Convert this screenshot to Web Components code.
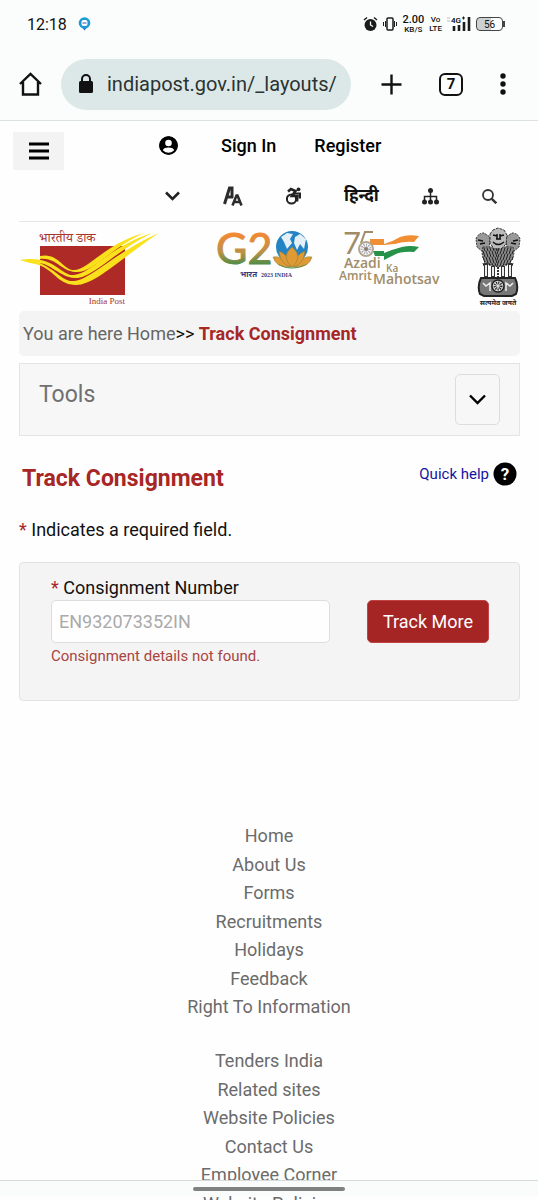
<!DOCTYPE html>
<html lang="en">
<head>
<meta charset="utf-8">
<meta name="viewport" content="width=device-width, initial-scale=1">
<title>Track Consignment - India Post</title>
<style>
  body {
    margin: 0;
    height: 100vh;
    overflow: hidden;
    background: #fefefe;
    color: #111;
    font-family: Roboto, "Noto Sans Devanagari", "Noto Sans", sans-serif;
    font-size: 18px;
  }
</style>
</head>
<body>
<phone-status time="12:18"></phone-status>
<browser-bar tabs="7">indiapost.gov.in/_layouts/</browser-bar>

<site-header>
  <a slot="account" href="#signin">Sign In</a>
  <a slot="account" href="#register">Register</a>
</site-header>

<page-body>
  <logo-strip></logo-strip>
  <bread-crumb>Track Consignment</bread-crumb>
  <tool-panel>Tools</tool-panel>
  <page-title>Track Consignment</page-title>
  <track-form number="EN932073352IN">Consignment details not found.</track-form>
</page-body>

<footer-links>
  <a href="#home">Home</a>
  <a href="#about">About Us</a>
  <a href="#forms">Forms</a>
  <a href="#recruitments">Recruitments</a>
  <a href="#holidays">Holidays</a>
  <a href="#feedback">Feedback</a>
  <a href="#rti">Right To Information</a>
</footer-links>
<footer-links>
  <a href="#tenders">Tenders India</a>
  <a href="#related">Related sites</a>
  <a href="#policies">Website Policies</a>
  <a href="#contact">Contact Us</a>
  <a href="#employee">Employee Corner</a>
  <a href="#website-policies">Website Policies</a>
</footer-links>
<gesture-bar></gesture-bar>

<script>
// Shared base: puts styles and markup in an open shadow root
class BaseElement extends HTMLElement {
  constructor() {
    super();
    const shadowRoot = this.attachShadow({mode: 'open'});
    shadowRoot.innerHTML = `
      <style>
        :host, * { box-sizing: border-box; }
        svg { display: block; flex: none; }
        button { font: inherit; color: inherit; padding: 0; border: 0; background: none; }
        ${this.styles()}
      </style>
      ${this.markup()}
    `;
  }
}

// Phone status row

class PhoneStatus extends BaseElement {
  styles() {
    return `
      :host {
        display: flex;
        align-items: center;
        height: 48px;
        padding: 0 33px 0 27px;
        background: #fbfdfd;
        font-size: 16px;
      }
      .badge { margin-left: 11px; }
      .right { display: flex; align-items: center; gap: 5px; margin-left: auto; }
      .stack {
        display: flex;
        flex-direction: column;
        align-items: center;
        font-weight: 500;
        font-size: 8px;
        line-height: 9px;
      }
      .stack b { font-size: 11px; line-height: 11px; font-weight: 500; }
      .battery {
        display: flex;
        align-items: center;
        justify-content: center;
        width: 27px;
        height: 14px;
        border: 1px solid #444;
        border-radius: 4px;
        background: linear-gradient(90deg, #ccd0d0 56%, #fbfdfd 56%);
        font-size: 10px;
      }
      .cell { display: flex; align-items: center; }
      .cell::after { content: ''; width: 2px; height: 6px; background: #444; }
    `;
  }
  markup() {
    return `
      <span>${this.getAttribute('time')}</span>
      <svg class="badge" width="13" height="14" viewBox="0 0 13 14">
        <path d="M4 10h5l-2.500 3.500z" fill="#3459a8"/>
        <circle cx="6.500" cy="6" r="5.800" fill="#1b9ad6"/>
        <rect x="3.500" y="3" width="6" height="6" rx="2" fill="#fff"/>
        <path d="M4.500 6h4" stroke="#3459a8"/>
      </svg>
      <div class="right">
        <svg width="15" height="16" viewBox="0 0 15 16">
          <circle cx="7.500" cy="9" r="6" fill="#1a1c1c"/>
          <path d="M1 4l3-2.500M14 4l-3-2.500" stroke="#1a1c1c" stroke-width="1.500"/>
          <path d="M7.500 5.500V9l2.500 1.500" fill="none" stroke="#fff" stroke-width="1.300"/>
        </svg>
        <svg width="14" height="14" viewBox="0 0 14 14" fill="none" stroke="#1a1c1c">
          <rect x="4" y="1" width="6" height="12" rx="1" stroke-width="1.500"/>
          <path d="M2.500 4v6M.5 5v4M11.500 4v6M13.500 5v4"/>
        </svg>
        <span class="stack"><b>2.00</b><span>KB/S</span></span>
        <span class="stack"><span>Vo</span><span>LTE</span></span>
        <svg width="24" height="16" viewBox="0 0 24 16">
          <path d="M0 2h3M0 5h3" stroke="#bbb"/>
          <text x="4" y="7" font-size="8" font-weight="500">4G</text>
          <path d="M15 2h3M16.500 .5v3" stroke="#1a1c1c"/>
          <path d="M7 15v-5M12 15V9M17 15V6M22 15V1" stroke="#1a1c1c" stroke-width="2.600"/>
        </svg>
        <span class="cell"><span class="battery">56</span></span>
      </div>
    `;
  }
}
customElements.define('phone-status', PhoneStatus);

// Address bar with home, tabs and menu

class BrowserBar extends BaseElement {
  styles() {
    return `
      :host {
        display: flex;
        align-items: center;
        height: 73px;
        padding: 0 32px 0 18px;
        border-bottom: 1px solid #dde3e4;
        background: #fbfdfd;
      }
      .address {
        display: flex;
        align-items: center;
        flex: 1;
        height: 51px;
        margin-left: 18px;
        padding-left: 18px;
        gap: 14px;
        border-radius: 26px;
        background: #dce8e7;
        font-size: 20px;
        color: #2b3333;
      }
      .tools { display: flex; align-items: center; gap: 37px; margin-left: 30px; }
      .tabs {
        width: 24px;
        height: 23px;
        border: 2px solid #111;
        border-radius: 6px;
        font-size: 15px;
        line-height: 19px;
        font-weight: 700;
      }
    `;
  }
  markup() {
    return `
      <button aria-label="Home page">
        <svg width="25" height="26" viewBox="0 0 25 26" fill="none" stroke="#111" stroke-width="2.400">
          <path d="M2 13L12.500 3 23 13M5 11v12.500h15V11"/>
        </svg>
      </button>
      <div class="address">
        <svg width="14" height="20" viewBox="0 0 14 20">
          <rect y="7" width="14" height="12" rx="1.500" fill="#111"/>
          <path d="M3 8V5a4 4 0 0 1 8 0v3" fill="none" stroke="#111" stroke-width="2"/>
        </svg>
        <span><slot></slot></span>
      </div>
      <div class="tools">
        <button aria-label="New tab">
          <svg width="21" height="21" viewBox="0 0 21 21" stroke="#111" stroke-width="2.400">
            <path d="M.5 10.500h20M10.500 .5v20"/>
          </svg>
        </button>
        <button class="tabs" aria-label="Open tabs">${this.getAttribute('tabs')}</button>
        <button aria-label="Menu">
          <svg width="6" height="22" viewBox="0 0 6 22" fill="#111">
            <circle cx="3" cy="3" r="2.700"/><circle cx="3" cy="11" r="2.700"/><circle cx="3" cy="19" r="2.700"/>
          </svg>
        </button>
      </div>
    `;
  }
}
customElements.define('browser-bar', BrowserBar);

// Menu toggle, account links and accessibility tools

class SiteHeader extends BaseElement {
  styles() {
    return `
      :host {
        display: flex;
        align-items: flex-start;
        height: 100px;
        padding: 11px 13px 0;
      }
      .toggle { display: grid; place-items: center; width: 51px; height: 38px; background: #f3f3f3; }
      .rows { display: flex; flex-direction: column; gap: 25px; margin-left: 95px; }
      .row { display: flex; align-items: center; height: 26px; gap: 43px; }
      .row:first-child { gap: 38px; }
      .row:last-child { padding-left: 6px; }
      .user { margin-right: 5px; }
      ::slotted(a) { color: #000; font-weight: 500; text-decoration: none; }
      .lang { font-size: 17px; font-weight: 700; }
    `;
  }
  markup() {
    return `
      <button class="toggle" aria-label="Toggle navigation">
        <svg width="20" height="18" viewBox="0 0 20 18" stroke="#000" stroke-width="3">
          <path d="M0 2h20M0 9h20M0 16h20"/>
        </svg>
      </button>
      <div class="rows">
        <div class="row">
          <svg class="user" width="19" height="19" viewBox="0 0 19 19">
            <circle cx="9.500" cy="9.500" r="9.300"/>
            <circle cx="9.500" cy="7" r="3.300" fill="#fff"/>
            <path d="M3.600 14.500c1.200-2.400 3-3 5.900-3s4.700.6 5.900 3a7.500 7.500 0 0 1-11.800 0z" fill="#fff"/>
            <circle cx="9.500" cy="9.500" r="8.300" fill="none" stroke="#000" stroke-width="2"/>
          </svg>
          <slot name="account"></slot>
        </div>
        <div class="row">
          <button aria-label="Expand">
            <svg width="15" height="10" viewBox="0 0 15 10" fill="none" stroke="#222" stroke-width="2.600">
              <path d="M1 1.500l6.500 6.500L14 1.500"/>
            </svg>
          </button>
          <button aria-label="Text size">
            <svg width="20" height="20" viewBox="0 0 20 20" fill="none" stroke="#2c2c2c">
              <path d="M1.500 18L6.500 2h2.500v10M4 11h6" stroke-width="3"/>
              <path d="M9.500 19.500l4-10h1l4 10M11 16h6" stroke-width="2.600"/>
            </svg>
          </button>
          <button aria-label="Accessibility">
            <svg width="15" height="18" viewBox="0 0 15 18" fill="none" stroke="#222">
              <circle cx="12.500" cy="2.300" r="1.900" fill="#222" stroke="none"/>
              <circle cx="5.500" cy="12" r="4.600" stroke-width="2"/>
              <path d="M2 4.500l3-2.500 4.500 2-3.500 5h5.500l-.5 5.500" stroke-width="2.600"/>
              <path d="M9 6.500h5v5" stroke-width="2"/>
            </svg>
          </button>
          <span class="lang" lang="hi">हिन्दी</span>
          <button aria-label="Sitemap">
            <svg width="17" height="17" viewBox="0 0 17 17" fill="#222">
              <circle cx="8.500" cy="2.600" r="2.500"/>
              <path d="M8.500 4v9M2.500 13V8.500h12V13" fill="none" stroke="#222" stroke-width="1.500"/>
              <circle cx="2.500" cy="14" r="2.500"/><circle cx="8.500" cy="14" r="2.500"/><circle cx="14.500" cy="14" r="2.500"/>
            </svg>
          </button>
          <button aria-label="Search">
            <svg width="15" height="15" viewBox="0 0 15 15" fill="none" stroke="#333">
              <circle cx="6" cy="6" r="5" stroke-width="1.800"/>
              <path d="M9.800 9.800l4.500 4.500" stroke-width="2.400"/>
            </svg>
          </button>
        </div>
      </div>
    `;
  }
}
customElements.define('site-header', SiteHeader);

class PageBody extends BaseElement {
  styles() {
    return `:host { display: block; padding: 0 18px 0 19px; }`;
  }
  markup() {
    return `<slot></slot>`;
  }
}
customElements.define('page-body', PageBody);

// India Post, G20, Azadi Ka Amrit Mahotsav and the state emblem

class LogoStrip extends BaseElement {
  styles() {
    return `
      :host {
        display: flex;
        justify-content: space-between;
        height: 90px;
        padding-top: 4px;
        border-top: 1px solid #e6e6e6;
      }
      svg { overflow: visible; }
    `;
  }
  // row of short strokes, used for the lions' manes
  mane() {
    let d = '';
    for (let y = 19; y < 35; y += 3) {
      for (let x = 9 + (y % 2); x < 40; x += 3) {
        d += `M${x} ${y}l${x < 24 ? 1 : -1} 3`;
      }
    }
    return d;
  }
  markup() {
    return `
      <svg width="173" height="80" viewBox="-1 0 173 80" role="img" aria-label="India Post">
        <text x="19" y="16" font-size="13" fill="#a8332b" font-family="Noto Serif Devanagari, serif">भारतीय डाक</text>
        <rect x="20" y="20" width="85" height="49" fill="#ae2a26"/>
        <g fill="#fbe11c">
          <path d="M20 30C38 26 43 44 54 44C68 44 88 16 124 7C92 21 72 48 55 46C41 45 36 31 20 33z"/>
          <path d="M0 34C34 28 40 50 54 49C70 48 92 19 132 7C95 25 72 53 55 52C38 51 32 36 12 36z"/>
          <path d="M0 34C30 32 40 57 54 55C70 54 97 25 139 7C101 32 74 60 55 59C35 58 34 40 10 37z"/>
        </g>
        <text x="105" y="78" font-size="9" text-anchor="end" fill="#a8332b" font-family="Liberation Serif, serif">India Post</text>
      </svg>

      <svg width="97" height="60" viewBox="0 -2 97 60" role="img" aria-label="G20 Bharat 2023 India">
        <defs>
          <linearGradient id="tri" x1="0" y1="0" x2="0" y2="1">
            <stop offset=".25" stop-color="#f08a35"/><stop offset=".6" stop-color="#b99147"/><stop offset=".9" stop-color="#2f8a45"/>
          </linearGradient>
        </defs>
        <text x="-1" y="36" font-size="43" fill="url(#tri)" stroke="url(#tri)" font-family="Lato, sans-serif">G2</text>
        <circle cx="75" cy="19" r="16" fill="#2383c4"/>
        <path d="M64 9l6-4 6 1-3 5 2 4-5 6-3-7zM78 9l5-3 6 5-2 10-4-5-3 6-3-7z" fill="#e4f0f5"/>
        <g fill="#e09a35" stroke="#8f7f35" stroke-width=".6">
          <path d="M56 29q10-2 18 10-15 1-18-10zM95 29q-10-2-18 10 15 1 18-10z"/>
          <path d="M62 23q10 4 13 16-12-2-13-16zM88 23q-10 4-13 16 12-2 13-16z"/>
          <path d="M75 19q12 10 0 20-12-10 0-20z"/>
        </g>
        <path d="M60 36q15 7 30 0-15 9-30 0z" fill="#4b8a45"/>
        <text x="23" y="49" font-size="8" font-weight="700" fill="#363b7c">भारत</text>
        <text x="44" y="49" font-size="6" font-weight="700" fill="#363b7c" font-family="Liberation Serif, serif">2023 INDIA</text>
      </svg>

      <svg width="111" height="62" viewBox="0 0 111 62" role="img" aria-label="Azadi Ka Amrit Mahotsav">
        <g fill="#a08c68" font-family="Open Sans, sans-serif">
          <text x="4" y="28" font-size="31" font-weight="400" font-family="Lato, sans-serif">7</text>
          <path d="M34 6h-8l-4 11" fill="none" stroke="#a08c68" stroke-width="2"/>
          <text x="5" y="42" font-size="14" font-weight="600">Azadi</text>
          <text x="47" y="46" font-size="10" font-weight="600">Ka</text>
          <text x="0" y="54" font-size="12" font-weight="600">Amrit</text>
          <text x="34" y="58" font-size="14" font-weight="600">Mahotsav</text>
        </g>
        <path d="M31 13h14v5q8-2 16-7 8-3 19-1l-5 6q-12-1-20 3-7 3-10 2l-14-1z" fill="#f18d32"/>
        <path d="M33 19h12l30-3-4 6q-10 0-18 4l-18 0z" fill="#fff"/>
        <path d="M34 25h11v2q10-4 18-6 8-2 17 0l-5 5q-13-1-20 3-6 3-10 5v-4l-9 0z" fill="#269148"/>
        <circle cx="27" cy="23" r="7" fill="#fff" stroke="#b3a78f" stroke-width="2"/>
        <circle cx="27" cy="23" r="3.500" fill="none" stroke="#a9a9b4" stroke-width="4" stroke-dasharray="1 1"/>
        <circle cx="27" cy="23" r="2" fill="#8a7a68"/>
      </svg>

      <svg width="45" height="82" viewBox="1 -3 45 82" role="img" aria-label="State Emblem of India">
        <g fill="#999" stroke="#333">
          <path d="M2 10q2-6 8-6l6 4-1 14-6 1-6-5zM46 10q-2-6-8-6l-6 4 1 14 6 1 6-5z" stroke-dasharray="2 1"/>
          <path d="M9 18q-3 11 5 17l10 3 10-3q8-6 5-17z" fill="#888" stroke-dasharray="2 1"/>
          <path d="M16 5l3-4 5-2 6 2 3 5-1 9-5 5h-7l-4-6z" fill="#bbb" stroke-dasharray="3 1"/>
        </g>
        <path d="${this.mane()}" stroke="#222" fill="none"/>
        <path d="M19 6l4 1M26 7l4-1M22 10h5M19 13q5 5 11 0M23 5v5M26 5v5M4 11l5 1M6 15l5-1M44 11l-5 1M42 15l-5-1" fill="none" stroke="#111" stroke-width="1.500"/>
        <g fill="none" stroke="#333">
          <path d="M12 34v14M36 34v14M19 37v11M29 37v11" stroke-width="4"/>
          <path d="M12 36v11M36 36v11M19 38v9M29 38v9" stroke="#eee" stroke-width="2"/>
          <path d="M24 38v10" stroke-width="2" stroke-dasharray="2 1"/>
        </g>
        <path d="M7 49h34q4 8 1 16l-4 2H10l-4-2q-3-8 1-16z" fill="#777" stroke="#222" stroke-width="2"/>
        <circle cx="24" cy="57" r="6" fill="#ddd" stroke="#222" stroke-width="1.500"/>
        <circle cx="24" cy="57" r="3" fill="none" stroke="#222" stroke-width="3" stroke-dasharray="1 1"/>
        <path d="M9 54l3 3 4-3v8M39 54l-3 3-4-3v8" fill="none" stroke="#eee" stroke-width="1.500"/>
        <text x="24" y="76" font-size="7" font-weight="700" text-anchor="middle" fill="#222">सत्यमेव जयते</text>
      </svg>
    `;
  }
}
customElements.define('logo-strip', LogoStrip);

class BreadCrumb extends BaseElement {
  styles() {
    return `
      :host {
        display: flex;
        align-items: center;
        height: 45px;
        padding: 0 4px;
        border-radius: 5px;
        background: #f4f4f4;
      }
      a { color: #666; text-decoration: none; }
      b { color: #a72626; font-weight: 700; }
    `;
  }
  markup() {
    return `<nav><a href="#home">You are here Home</a>&gt;&gt; <b><slot></slot></b></nav>`;
  }
}
customElements.define('bread-crumb', BreadCrumb);

class ToolPanel extends BaseElement {
  styles() {
    return `
      :host {
        display: flex;
        align-items: flex-start;
        justify-content: space-between;
        height: 73px;
        margin-top: 7px;
        padding: 10px 19px;
        border: 1px solid #e4e4e4;
        background: #f7f7f7;
      }
      h2 { margin: 0; font-size: 23px; line-height: 42px; font-weight: 400; color: #707070; }
      button {
        display: grid;
        place-items: center;
        width: 45px;
        height: 51px;
        border: 1px solid #ddd;
        border-radius: 5px;
      }
    `;
  }
  markup() {
    return `
      <h2><slot></slot></h2>
      <button aria-label="Show tools">
        <svg width="17" height="12" viewBox="0 0 17 12" fill="none" stroke="#000" stroke-width="2.400">
          <path d="M1 1.500L8.500 9 16 1.500"/>
        </svg>
      </button>
    `;
  }
}
customElements.define('tool-panel', ToolPanel);

class PageTitle extends BaseElement {
  styles() {
    return `
      :host {
        display: flex;
        align-items: flex-start;
        justify-content: space-between;
        margin-top: 26px;
        padding: 0 3px;
      }
      h1 { margin: 0; padding-top: 3px; font-size: 23px; line-height: 28px; font-weight: 700; color: #a72626; }
      a { display: flex; align-items: center; gap: 4px; font-size: 15px; color: #1414a0; text-decoration: none; }
    `;
  }
  markup() {
    return `
      <h1><slot></slot></h1>
      <a href="#help">Quick help
        <svg width="24" height="24" viewBox="0 0 24 24">
          <circle cx="12" cy="12" r="11.500"/>
          <text x="12" y="18" font-size="17" font-weight="700" text-anchor="middle" fill="#fff">?</text>
        </svg>
      </a>
    `;
  }
}
customElements.define('page-title', PageTitle);

// Consignment number form, the error text comes in the slot

class TrackForm extends BaseElement {
  styles() {
    return `
      :host { display: block; }
      p { margin: 0; }
      .star { color: #a72626; }
      .note { margin-top: 25px; line-height: 24px; }
      form {
        display: flex;
        align-items: flex-start;
        justify-content: space-between;
        height: 139px;
        margin-top: 20px;
        padding: 12px 30px 12px 31px;
        border: 1px solid #e2e2e2;
        border-radius: 4px;
        background: #f4f4f4;
      }
      .field { display: flex; flex-direction: column; flex: 1; margin-right: 37px; }
      label { line-height: 25px; }
      input {
        width: 100%;
        height: 43px;
        padding: 0 7px;
        border: 1px solid #ddd;
        border-radius: 5px;
        background: #fefefe;
        font: inherit;
        color: #aaa;
      }
      .error { margin-top: 3px; font-size: 15px; line-height: 20px; color: #a94442; }
      button {
        width: 122px;
        height: 43px;
        margin-top: 25px;
        border: 1px solid #c04444;
        border-radius: 5px;
        background: #a52525;
        color: #fff;
      }
    `;
  }
  markup() {
    return `
      <p class="note"><span class="star">*</span> Indicates a required field.</p>
      <form>
        <div class="field">
          <label for="number"><span class="star">*</span> Consignment Number</label>
          <input id="number" type="text" value="${this.getAttribute('number')}" disabled>
          <p class="error"><slot></slot></p>
        </div>
        <button type="button">Track More</button>
      </form>
    `;
  }
}
customElements.define('track-form', TrackForm);

class FooterLinks extends BaseElement {
  styles() {
    return `
      :host { display: block; margin-top: 122px; }
      :host(:last-of-type) { margin-top: 25px; }
      nav { display: flex; flex-direction: column; align-items: center; }
      ::slotted(a) { margin-bottom: 4px; line-height: 25px; color: #6b6b6b; text-decoration: none; }
      ::slotted(a:nth-of-type(even)) { margin-bottom: 3px; }
    `;
  }
  markup() {
    return `<nav><slot></slot></nav>`;
  }
}
customElements.define('footer-links', FooterLinks);

// System gesture handle, stays over the page
class GestureBar extends BaseElement {
  styles() {
    return `
      :host {
        display: flex;
        justify-content: center;
        align-items: center;
        position: fixed;
        left: 0;
        right: 0;
        bottom: 4px;
        height: 16px;
        border-top: 1px solid #d5dadb;
        background: #fafcfc;
      }
      div { width: 152px; height: 4px; border-radius: 2px; background: #808080; }
    `;
  }
  markup() {
    return `<div></div>`;
  }
}
customElements.define('gesture-bar', GestureBar);
</script>
</body>
</html>
